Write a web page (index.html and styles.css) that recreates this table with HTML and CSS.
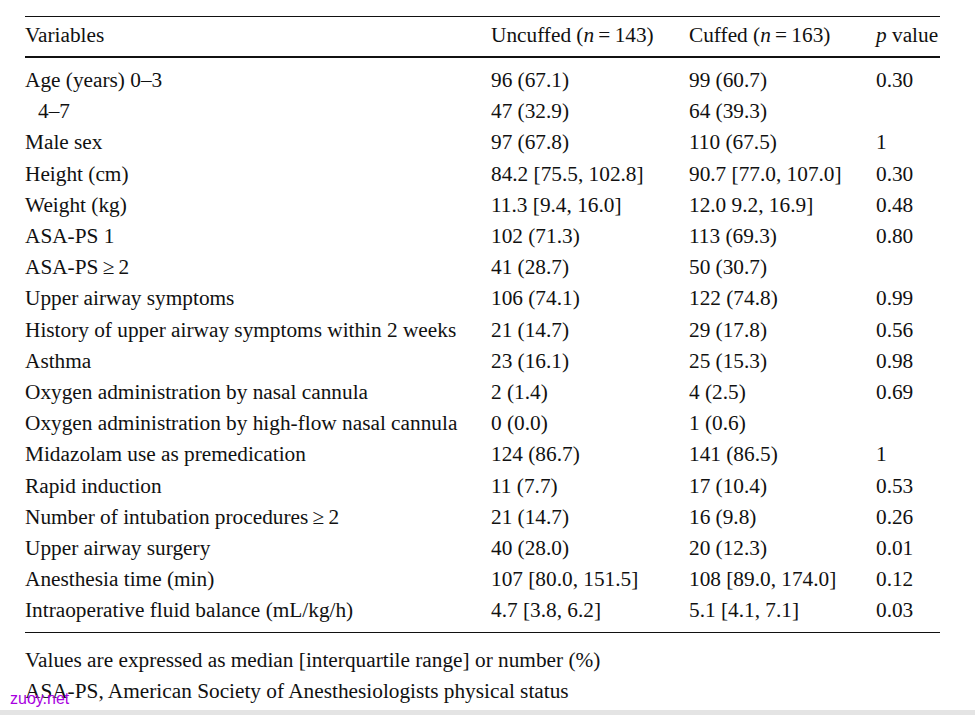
FILE: index.html
```html
<!DOCTYPE html>
<html lang="en">

<head>
  <meta charset="UTF-8">
  <title>Patient characteristics</title>
  <link rel="stylesheet" href="styles.css">
</head>

<body>
  <div class="page">
    <table class="stats">
      <thead>
        <tr>
          <th class="c-var">Variables</th>
          <th class="c-a">Uncuffed (<i>n</i>&#8201;=&#8201;143)</th>
          <th class="c-b">Cuffed (<i>n</i>&#8201;=&#8201;163)</th>
          <th class="c-p"><i>p</i> value</th>
        </tr>
      </thead>
      <tbody>
        <tr class="first"><td>Age (years) 0–3</td><td>96 (67.1)</td><td>99 (60.7)</td><td>0.30</td></tr>
        <tr><td class="sub">4–7</td><td>47 (32.9)</td><td>64 (39.3)</td><td></td></tr>
        <tr><td>Male sex</td><td>97 (67.8)</td><td>110 (67.5)</td><td>1</td></tr>
        <tr><td>Height (cm)</td><td>84.2 [75.5, 102.8]</td><td>90.7 [77.0, 107.0]</td><td>0.30</td></tr>
        <tr><td>Weight (kg)</td><td>11.3 [9.4, 16.0]</td><td>12.0 9.2, 16.9]</td><td>0.48</td></tr>
        <tr><td>ASA-PS 1</td><td>102 (71.3)</td><td>113 (69.3)</td><td>0.80</td></tr>
        <tr><td>ASA-PS&#8201;≥&#8201;2</td><td>41 (28.7)</td><td>50 (30.7)</td><td></td></tr>
        <tr><td>Upper airway symptoms</td><td>106 (74.1)</td><td>122 (74.8)</td><td>0.99</td></tr>
        <tr><td>History of upper airway symptoms within 2 weeks</td><td>21 (14.7)</td><td>29 (17.8)</td><td>0.56</td></tr>
        <tr><td>Asthma</td><td>23 (16.1)</td><td>25 (15.3)</td><td>0.98</td></tr>
        <tr><td>Oxygen administration by nasal cannula</td><td>2 (1.4)</td><td>4 (2.5)</td><td>0.69</td></tr>
        <tr><td>Oxygen administration by high-flow nasal cannula</td><td>0 (0.0)</td><td>1 (0.6)</td><td></td></tr>
        <tr><td>Midazolam use as premedication</td><td>124 (86.7)</td><td>141 (86.5)</td><td>1</td></tr>
        <tr><td>Rapid induction</td><td>11 (7.7)</td><td>17 (10.4)</td><td>0.53</td></tr>
        <tr><td>Number of intubation procedures&#8201;≥&#8201;2</td><td>21 (14.7)</td><td>16 (9.8)</td><td>0.26</td></tr>
        <tr><td>Upper airway surgery</td><td>40 (28.0)</td><td>20 (12.3)</td><td>0.01</td></tr>
        <tr><td>Anesthesia time (min)</td><td>107 [80.0, 151.5]</td><td>108 [89.0, 174.0]</td><td>0.12</td></tr>
        <tr class="last"><td>Intraoperative fluid balance (mL/kg/h)</td><td>4.7 [3.8, 6.2]</td><td>5.1 [4.1, 7.1]</td><td>0.03</td></tr>
      </tbody>
    </table>

    <div class="notes">
      <p>Values are expressed as median [interquartile range] or number (%)</p>
      <p>ASA-PS, American Society of Anesthesiologists physical status</p>
    </div>
  </div>

  <div class="bottom-bar"></div>
  <span class="watermark">zuoy.net</span>
</body>

</html>
```

FILE: styles.css
```css
html, body {
  margin: 0;
  padding: 0;
  background: #ffffff;
}

body {
  width: 975px;
  height: 715px;
  overflow: hidden;
  position: relative;
  font-family: "Liberation Serif", "Times New Roman", serif;
  font-size: 21.3px;
  color: #111;
}

.page {
  padding: 16px 0 0 25px;
  width: 915px;
}

/* 表格 */
.stats {
  width: 915px;
  border-collapse: collapse;
  table-layout: fixed;
}

.stats th,
.stats td {
  padding: 0;
  text-align: left;
  font-weight: normal;
  white-space: nowrap;
  vertical-align: middle;
  line-height: 31.2px;
}

.stats thead tr {
  border-top: 1px solid #111;
  border-bottom: 2px solid #111;
}

.stats th {
  height: 37px;
  padding-bottom: 2px;
}

.stats .c-var { width: 466px; }
.stats .c-a { width: 198px; }
.stats .c-b { width: 187px; }
.stats .c-p { width: 64px; }

.stats tr.first td {
  padding-top: 7px;
}

.stats tr.last td {
  padding-bottom: 5px;
}

.stats tbody tr.last {
  border-bottom: 1.5px solid #111;
}

.stats .sub {
  padding-left: 13px;
}

/* 表注 */
.notes {
  padding-top: 12px;
}

.notes p {
  margin: 0;
  line-height: 31px;
}

.bottom-bar {
  position: absolute;
  left: 0;
  right: 0;
  bottom: 0;
  height: 5px;
  background: #e4e4e4;
}

.watermark {
  position: absolute;
  left: 10px;
  top: 690px;
  font-family: "Liberation Sans", Arial, sans-serif;
  font-size: 16px;
  line-height: 18px;
  color: #a800e0;
}
```
